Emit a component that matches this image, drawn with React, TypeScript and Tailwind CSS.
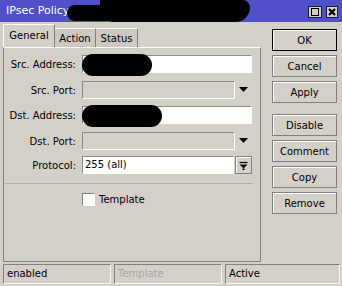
import type { ReactNode } from "react";

const font = { fontFamily: '"DejaVu Sans", "Liberation Sans", sans-serif' };

function Label({ children }: { children: ReactNode }) {
  return <div className="w-[73px] shrink-0 pr-px text-right text-[10px] text-black">{children}</div>;
}

function TextBox({ value, wide = true }: { value?: string; wide?: boolean }) {
  return (
    <div
      className={`h-[18px] ${wide ? "w-[170px]" : "w-[152px]"} border border-[#8a8a8a] border-b-white border-r-white bg-white px-[2px] text-[10px] leading-[16px] text-black`}
    >
      {value}
    </div>
  );
}

function PortBox() {
  return (
    <div className="flex items-center">
      <div className="h-[18px] w-[153px] border border-[#8a8a8a] border-b-white border-r-white bg-[#d4d0c8]" />
      <div className="flex w-[17px] justify-center">
        <svg width="10" height="6" viewBox="0 0 10 6">
          <path d="M0 0H9L4.5 5Z" fill="#000" />
        </svg>
      </div>
    </div>
  );
}

function Btn({ children, main = false }: { children: ReactNode; main?: boolean }) {
  return (
    <div
      className={`flex h-[22px] w-[65px] items-center justify-center text-[10px] text-black ${
        main ? "border border-black shadow-[inset_1px_1px_0_#fff]" : "border border-[#808080] shadow-[inset_1px_1px_0_#fff]"
      }`}
    >
      {children}
    </div>
  );
}

function Cell({ children, muted = false }: { children: ReactNode; muted?: boolean }) {
  return (
    <div
      className={`h-[20px] border border-[#808080] border-b-[#f4f4f4] border-r-[#f4f4f4] px-[3px] text-[10px] leading-[18px] ${
        muted ? "text-[#a8a8a8]" : "text-black"
      }`}
    >
      {children}
    </div>
  );
}

export default function App() {
  return (
    <div className="relative flex h-[286px] w-[342px] flex-col overflow-hidden bg-[#d4d0c8]" style={font}>
      {/* title bar */}
      <div className="flex h-[22px] items-center justify-between bg-[#5050c8] pl-[6px] pr-[4px]">
        <span className="text-[11px] text-white">IPsec Policy - </span>
        <div className="flex gap-[4px] pt-px">
          <div className="flex h-[12px] w-[14px] items-center justify-center border border-[#202020] bg-[#d4d0c8]">
            <div className="h-[8px] w-[8px] border border-black" />
          </div>
          <div className="flex h-[12px] w-[12px] items-center justify-center border border-[#202020] bg-[#d4d0c8]">
            <svg width="8" height="8" viewBox="0 0 8 8">
              <path d="M1 1L7 7M7 1L1 7" stroke="#000" strokeWidth="2" />
            </svg>
          </div>
        </div>
      </div>

      {/* redaction marks */}
      <div className="absolute left-[67px] top-[5px] h-[16px] w-[60px] rounded-full bg-black" />
      <div className="absolute left-[100px] top-0 h-[22px] w-[150px] rounded-b-[40px] rounded-tr-[20px] bg-black" />

      <div className="flex flex-1">
        {/* left: tabs + panel */}
        <div className="ml-[3px] flex w-[258px] flex-col">
          <div className="flex h-[25px] items-end">
            <div className="h-[23px] w-[52px] border-l border-t border-r border-l-white border-t-white border-r-[#808080] bg-[#d4d0c8] pt-[3px] text-center text-[10px] text-black">
              General
            </div>
            <div className="h-[19px] w-[41px] border-t border-r border-t-white border-r-[#808080] bg-[#cdc9c1] pt-[2px] text-center text-[10px] text-black">
              Action
            </div>
            <div className="h-[19px] w-[42px] border-t border-r border-t-white border-r-[#808080] bg-[#cdc9c1] pt-[2px] text-center text-[10px] text-black">
              Status
            </div>
          </div>
          <div className="flex h-[215px] flex-col border border-[#808080] border-t-white pt-[7px]">
            <div className="flex items-center gap-[5px]">
              <Label>Src. Address:</Label>
              <TextBox />
            </div>
            <div className="mt-[8px] flex items-center gap-[5px]">
              <Label>Src. Port:</Label>
              <PortBox />
            </div>
            <div className="mt-[7px] flex items-center gap-[5px]">
              <Label>Dst. Address:</Label>
              <TextBox />
            </div>
            <div className="mt-[8px] flex items-center gap-[5px]">
              <Label>Dst. Port:</Label>
              <PortBox />
            </div>
            <div className="mt-[6px] flex items-center gap-[5px]">
              <Label>Protocol:</Label>
              <div className="flex gap-px">
                <TextBox value="255 (all)" wide={false} />
                <div className="flex h-[18px] w-[17px] items-center justify-center border border-[#808080] shadow-[inset_1px_1px_0_#fff]">
                  <svg width="9" height="9" viewBox="0 0 9 9">
                    <path d="M0.5 1.5H8.5" stroke="#000" strokeWidth="1.2" />
                    <path d="M0.5 3.5H8.5L4.5 7.5Z" fill="#000" />
                    <path d="M3.5 7.5H5.5V9H3.5Z" fill="#000" />
                  </svg>
                </div>
              </div>
            </div>
            <div className="mt-[9px] ml-px h-[2px] w-[248px] border-t border-[#b4b0a8] border-b-white" />
            <div className="mt-[7px] flex items-center gap-[4px] pl-[78px]">
              <div className="h-[13px] w-[13px] border border-[#808080] border-b-white border-r-white bg-white" />
              <span className="text-[10px] text-black">Template</span>
            </div>
          </div>
        </div>

        {/* right: buttons */}
        <div className="ml-[11px] flex flex-col pt-[7px]">
          <div className="flex flex-col gap-[4px]">
            <Btn main>OK</Btn>
            <Btn>Cancel</Btn>
            <Btn>Apply</Btn>
          </div>
          <div className="mt-[11px] flex flex-col gap-[4px]">
            <Btn>Disable</Btn>
            <Btn>Comment</Btn>
            <Btn>Copy</Btn>
            <Btn>Remove</Btn>
          </div>
        </div>
      </div>

      <div className="absolute left-[82px] top-[54px] h-[22px] w-[70px] rounded-[11px] bg-black" />
      <div className="absolute left-[82px] top-[105px] h-[22px] w-[80px] rounded-[11px] bg-black" />

      {/* status bar */}
      <div className="mb-[2px] mt-[2px] grid grid-cols-[108px_108px_115px] gap-[3px] pl-[3px]">
        <Cell>enabled</Cell>
        <Cell muted>Template</Cell>
        <Cell>Active</Cell>
      </div>
    </div>
  );
}
